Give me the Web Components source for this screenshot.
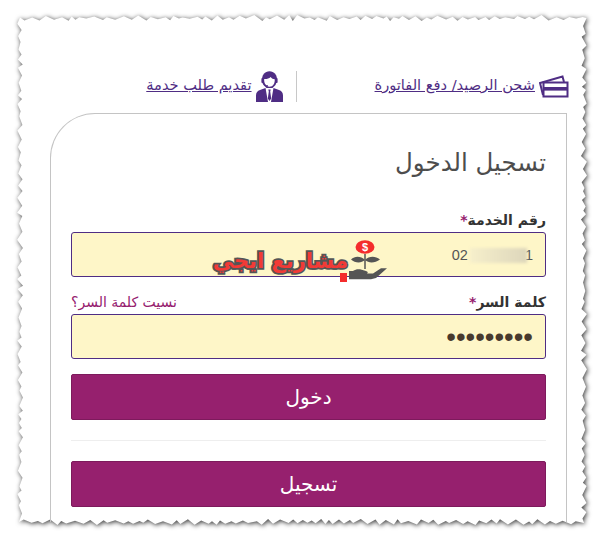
<!DOCTYPE html>
<html lang="ar">
<head>
<meta charset="utf-8">
<title>تسجيل الدخول</title>
<style>
  html, body { margin: 0; background: #fff; }
  body { font-family: "DejaVu Sans", "Noto Sans", sans-serif; }
</style>
</head>
<body>
<torn-sheet>
  <service-bar>
    <service-link slot="first" text="شحن الرصيد/ دفع الفاتورة" icon="cards"></service-link>
    <service-link slot="second" text="تقديم طلب خدمة" icon="agent"></service-link>
  </service-bar>
  <login-card heading="تسجيل الدخول">
    <form-field label="رقم الخدمة">
      <span dir="ltr">02<i style="display:inline-block;width:57px"></i>1</span>
    </form-field>
    <form-field label="كلمة السر" hint="نسيت كلمة السر؟" kind="password">
      <span>•••••••••</span>
    </form-field>
    <action-button>دخول</action-button>
    <hr-line></hr-line>
    <action-button>تسجيل</action-button>
  </login-card>
  <brand-stamp></brand-stamp>
</torn-sheet>

<script>
const ICONS = {
  cards: `<svg class="cards" width="30" height="24" viewBox="0 0 30 24" fill="none" stroke="#4f2d84" stroke-width="2">
      <rect x="4.500" y="8.500" width="24" height="14"/>
      <rect x="4" y="13" width="25" height="3.600" fill="#4f2d84" stroke="none"/>
      <path d="M4 21 1 9 23.500 2.500 25 8"/>
    </svg>`,
  agent: `<svg width="27" height="31" viewBox="0 0 27 31" fill="#4f2d84">
      <path d="M6 10C5.500 4 9 .3 13.500 .3S21.500 4 21 10l-1.500 4-3 3h-6l-3-3z"/>
      <path d="M8.200 8c2 .3 4.500-.2 6.500-2 1 1.500 2.500 2.200 4 2.200.4 4-1.700 7.500-5.200 7.500S7.800 12 8.200 8z" fill="#fff"/>
      <rect x="5.400" y="7" width="2.200" height="5" rx="1"/>
      <rect x="19.400" y="7" width="2.200" height="5" rx="1"/>
      <path d="M7 12c.5 2 2.500 2.800 5 2.800" fill="none" stroke="#4f2d84" stroke-width="1"/>
      <path d="M0 31v-6.500c0-3 1.500-4.500 4-5.500l5.500-2L12 31zM27 31v-6.500c0-3-1.500-4.500-4-5.500l-5.500-2L15 31z"/>
      <path d="M12.300 18.500h2.400l-.5 2 1 7-1.700 2.500-1.700-2.500 1-7z"/>
    </svg>`
};

class TornSheet extends HTMLElement {
  constructor() {
    super();
    this.attachShadow({ mode: "open" });
    this.shadowRoot.innerHTML = `
      <style>
        :host { display: block; position: relative; width: 604px; height: 541px; overflow: hidden; box-sizing: border-box; padding: 71px 36px 0 50px; }
        svg { position: absolute; left: 0; top: 0; }
        .content { position: relative; display: flex; flex-direction: column; }
      </style>
      <svg width="604" height="541"><path fill="#fff" style="filter: drop-shadow(1px 1px 2.500px #333)"/></svg>
      <div class="content"><slot></slot></div>
    `;
  }

  connectedCallback() {
    // torn edge, fixed seed so every run gives the same teeth
    let seed = 17;
    const rnd = () => {
      seed = (seed * 16807) % 2147483647;
      return seed / 2147483647;
    };
    const pts = [];
    const edge = (x0, y0, x1, y1, nx, ny) => {
      const len = Math.hypot(x1 - x0, y1 - y0);
      let d = 0;
      let out = true;
      while (d < len) {
        const t = d / len;
        const a = (out ? 1 : -1) * (0.5 + rnd() * 2.5);
        pts.push([x0 + (x1 - x0) * t + nx * a, y0 + (y1 - y0) * t + ny * a]);
        out = !out;
        d += 3 + rnd() * 6;
      }
    };
    edge(20, 18, 584, 18, 0, -1);
    edge(584, 18, 584, 522, 1, 0);
    edge(584, 522, 20, 522, 0, 1);
    edge(20, 522, 20, 18, -1, 0);
    const d = "M" + pts.map((p) => p[0].toFixed(1) + " " + p[1].toFixed(1)).join("L") + "Z";
    this.shadowRoot.querySelector("path").setAttribute("d", d);
  }
}

class ServiceBar extends HTMLElement {
  constructor() {
    super();
    this.attachShadow({ mode: "open" });
    this.shadowRoot.innerHTML = `
      <style>
        :host { display: flex; direction: rtl; height: 31px; margin-bottom: 11px; margin-right: -1px; }
        .sep { width: 1px; background: #c8c8c8; margin: 0 78px 0 13px; }
      </style>
      <slot name="first"></slot><div class="sep"></div><slot name="second"></slot>
    `;
  }
}

class ServiceLink extends HTMLElement {
  constructor() {
    super();
    this.attachShadow({ mode: "open" });
  }

  connectedCallback() {
    this.shadowRoot.innerHTML = `
      <style>
        :host { display: flex; align-items: flex-end; gap: 4px; direction: rtl; }
        a { font-size: 14.6px; line-height: 18px; color: #4f2d84; text-decoration: underline; margin-bottom: 8px; white-space: nowrap; }
        svg { display: block; }
        svg.cards { margin-bottom: 4px; }
      </style>
      ${ICONS[this.getAttribute("icon")]}
      <a href="#">${this.getAttribute("text")}</a>
    `;
  }
}

class LoginCard extends HTMLElement {
  constructor() {
    super();
    this.attachShadow({ mode: "open" });
  }

  connectedCallback() {
    this.shadowRoot.innerHTML = `
      <style>
        :host { display: block; direction: rtl; box-sizing: border-box; width: 517px; height: 409px; border: 1px solid #c4c4c4; border-bottom: 0; border-top-left-radius: 45px; padding: 19px 20px 0 20px; }
        h1 { margin: 0 0 17px; font-size: 24.5px; line-height: 60px; height: 60px; font-weight: 400; color: #4d4d4d; }
      </style>
      <h1>${this.getAttribute("heading")}</h1>
      <slot></slot>
    `;
  }
}

class FormField extends HTMLElement {
  constructor() {
    super();
    this.attachShadow({ mode: "open" });
  }

  connectedCallback() {
    const hint = this.getAttribute("hint");
    const isPassword = this.getAttribute("kind") === "password";
    this.shadowRoot.innerHTML = `
      <style>
        :host { display: block; margin-bottom: 15px; }
        .top { display: flex; justify-content: space-between; align-items: center; height: 20px; margin-bottom: 2px; }
        label { font-size: 14px; font-weight: 700; color: #333; }
        label b { color: #96206e; }
        a { font-size: 14px; color: #96206e; text-decoration: none; }
        .box { position: relative; box-sizing: border-box; height: 45px; border: 1px solid #4f2d84; border-radius: 3px; background: #fef6c8; padding: 0 12px; display: flex; align-items: center;
               font: ${isPassword ? "27.5px" : "14.5px"} "Liberation Sans", sans-serif; color: ${isPassword ? "#483a2e" : "#555"}; }
        .blur { position: absolute; left: 398px; top: 15px; width: 57px; height: 15px; background: linear-gradient(90deg, #f6efcb, #ddd6bb); filter: blur(1.5px); }
      </style>
      <div class="top"><label>${this.getAttribute("label")}<b>*</b></label>${hint ? `<a href="#">${hint}</a>` : ""}</div>
      <div class="box"><slot></slot>${isPassword ? "" : `<div class="blur"></div>`}</div>
    `;
  }
}

class ActionButton extends HTMLElement {
  constructor() {
    super();
    this.attachShadow({ mode: "open" });
    this.shadowRoot.innerHTML = `
      <style>
        :host { display: block; }
        button { display: block; width: 100%; height: 46px; box-sizing: border-box; border: 1px solid #7d1a5c; border-radius: 2px; background: #96206e; color: #fff; font: 20px "DejaVu Sans", sans-serif; padding: 0; }
      </style>
      <button><slot></slot></button>
    `;
  }
}

class HrLine extends HTMLElement {
  constructor() {
    super();
    this.attachShadow({ mode: "open" });
    this.shadowRoot.innerHTML = `
      <style>:host { display: block; height: 1px; background: #eeeeee; margin: 20px 0; }</style>
    `;
  }
}

class BrandStamp extends HTMLElement {
  constructor() {
    super();
    this.attachShadow({ mode: "open" });
    this.shadowRoot.innerHTML = `
      <style>
        :host { position: absolute; left: 164px; top: 167px; width: 176px; height: 46px; display: block; }
        .name { position: absolute; left: 0; top: 5px; width: 134px; direction: rtl; text-align: center; white-space: nowrap; font: 700 21px/36px "DejaVu Sans", sans-serif; color: #f23a36; -webkit-text-stroke: 3.5px #555; paint-order: stroke fill; }
        svg { position: absolute; left: 124px; top: 0; }
      </style>
      <div class="name">مشاريع ايجي</div>
      <svg width="52" height="46" viewBox="0 0 52 46">
        <rect x="2" y="35" width="7" height="9" fill="#f42c2c"/>
        <ellipse cx="27" cy="9" rx="9.500" ry="6.800" fill="#f42c2c"/>
        <text x="27" y="13" font-family="Liberation Sans" font-size="11" font-weight="700" fill="#fff" text-anchor="middle">$</text>
        <path d="M27 16v15" stroke="#555" stroke-width="1.500"/>
        <path d="M27 22c-4-4-10-4.500-14-.5 4 3.500 10 4 14 .5zM27 22c4-4 10-4.500 15-.5-5 3.500-11 4-15 .5z" fill="#555"/>
        <path d="M11 33h4c2.500-2 5-2 7-1.700l6 1.700c1.500.5 2.500 1.500 1 2.500h6l8-5.200h6L38 40l-5 1.300H11z" fill="#555"/>
      </svg>
    `;
  }
}

customElements.define("torn-sheet", TornSheet);
customElements.define("service-bar", ServiceBar);
customElements.define("service-link", ServiceLink);
customElements.define("login-card", LoginCard);
customElements.define("form-field", FormField);
customElements.define("action-button", ActionButton);
customElements.define("hr-line", HrLine);
customElements.define("brand-stamp", BrandStamp);
</script>
</body>
</html>
